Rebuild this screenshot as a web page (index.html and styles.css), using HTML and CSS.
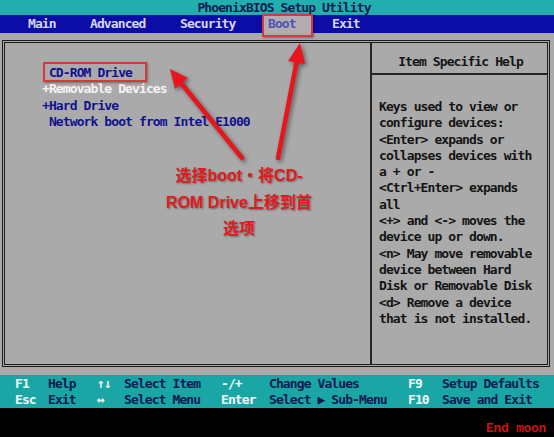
FILE: index.html
```html
<!DOCTYPE html>
<html lang="zh">
<head>
<meta charset="utf-8">
<title>PhoenixBIOS Setup Utility</title>
<link rel="stylesheet" href="styles.css">
</head>
<body>
<div class="screen">
  <header class="title">PhoenixBIOS Setup Utility</header>
  <nav class="menu">
    <span class="mi mi-main">Main</span>
    <span class="mi mi-adv">Advanced</span>
    <span class="mi mi-sec">Security</span>
    <span class="mi mi-boot">Boot</span>
    <span class="mi mi-exit">Exit</span>
  </nav>
  <main class="main">
    <div class="frame">
      <section class="left">
        <div class="item"> CD-ROM Drive</div>
        <div class="item white">+Removable Devices</div>
        <div class="item">+Hard Drive</div>
        <div class="item"> Network boot from Intel E1000</div>
      </section>
      <aside class="right">
        <div class="help-head">Item Specific Help</div>
        <div class="help-body">Keys used to view or
configure devices:
&lt;Enter&gt; expands or
collapses devices with
a + or -
&lt;Ctrl+Enter&gt; expands
all
&lt;+&gt; and &lt;-&gt; moves the
device up or down.
&lt;n&gt; May move removable
device between Hard
Disk or Removable Disk
&lt;d&gt; Remove a device
that is not installed.</div>
      </aside>
    </div>
  </main>
  <footer class="keys">
    <span class="k">F1</span><span class="d">Help</span><span class="k">↑↓</span><span class="d">Select Item</span><span class="k">-/+</span><span class="d">Change Values</span><span class="k">F9</span><span class="d">Setup Defaults</span>
    <span class="k">Esc</span><span class="d">Exit</span><span class="k">↔</span><span class="d">Select Menu</span><span class="k">Enter</span><span class="d">Select ▶ Sub-Menu</span><span class="k">F10</span><span class="d">Save and Exit</span>
  </footer>
  <div class="bottom"><span class="sig">End moon</span></div>

  <div class="mark mark-boot"></div>
  <div class="mark mark-cd"></div>
  <svg class="arrows" width="554" height="437" viewBox="0 0 554 437">
    <g class="arrow">
      <line x1="242" y1="158" x2="181" y2="83" />
      <polygon points="170,69 188,78 175,89" />
    </g>
    <g class="arrow">
      <line x1="278" y1="158" x2="296.6" y2="62" />
      <polygon points="300,43 305,64 288,61" />
    </g>
  </svg>
  <div class="note">选择boot・将CD-<br>ROM Drive上移到首<br>选项</div>
</div>
</body>
</html>
```
FILE: styles.css
```css
* { box-sizing: border-box; }
html, body { margin: 0; padding: 0; background: #000; }
body { width: 554px; height: 437px; overflow: hidden; }

.screen {
  position: relative;
  width: 554px;
  height: 437px;
  display: flex;
  flex-direction: column;
  font-family: "DejaVu Sans Mono", "Liberation Mono", monospace;
  font-weight: bold;
  font-size: 13px;
  letter-spacing: -0.9px;
}

.title {
  height: 15px;
  line-height: 16px;
  background: #22aeae;
  color: #0c1e4e;
  text-align: center;
  padding-left: 14px;
}

.menu {
  height: 18px;
  background: #0c0ca6;
  color: #d6d6ee;
  display: flex;
  align-items: stretch;
  line-height: 18px;
  padding-left: 28px;
}
.mi { display: block; }
.mi-main { width: 62px; }
.mi-adv { width: 90px; }
.mi-sec { width: 82px; }
.mi-boot {
  width: 51px;
  padding-left: 6px;
  background: #b4acb2;
  color: #4a56b4;
}
.mi-exit { margin-left: 19px; }

.main {
  height: 342px;
  background: #aaaaaa;
  padding: 7px 4px 0 2px;
}
.frame {
  height: 327px;
  border: 3px double #1c1c1c;
  display: flex;
}
.left {
  flex: 1;
  padding: 22px 0 0 37px;
  color: #12128e;
}
.item {
  white-space: pre;
  height: 16.3px;
  line-height: 16.3px;
}
.item.white { color: #f4f4f4; }

.right {
  width: 177px;
  border-left: 2px solid #262626;
  color: #141414;
  display: flex;
  flex-direction: column;
}
.help-head {
  height: 32px;
  border-bottom: 2px solid #262626;
  padding-top: 11px;
  line-height: 16px;
  text-align: center;
  padding-left: 2px;
}
.help-body {
  white-space: pre;
  padding: 24px 0 0 7px;
  line-height: 16.3px;
}

.keys {
  height: 33px;
  background: #1ba6a6;
  display: grid;
  grid-template-columns: 33px 49px 27px 97px 48px 139px 34px auto;
  grid-auto-rows: 16px;
  padding: 0 0 0 15px;
  line-height: 18px;
}
.keys .k { color: #f2f6f6; white-space: pre; }
.keys .d { color: #0c1a52; white-space: pre; }

.bottom {
  flex: 1;
  background: #000;
  display: flex;
  justify-content: flex-end;
  align-items: flex-end;
  padding: 0 8px 0 0;
}
.sig {
  color: #cc1414;
  font-family: "Liberation Mono", monospace;
  font-size: 13px;
  letter-spacing: -0.3px;
  line-height: 16px;
}

/* annotations over the screenshot */
.mark {
  position: absolute;
  border: 2px solid #d8383c;
  box-shadow: 1px 1px 2px rgba(0,0,0,0.35);
}
.mark-boot { left: 262px; top: 14px; width: 51px; height: 23px; }
.mark-cd { left: 43px; top: 62px; width: 104px; height: 20px; }

.arrows {
  position: absolute;
  left: 0;
  top: 0;
  filter: drop-shadow(2px 2px 2px rgba(0,0,0,0.45));
}
.arrow line { stroke: #e8161c; stroke-width: 4.5; stroke-linecap: round; }
.arrow polygon { fill: #e8161c; }

.note {
  position: absolute;
  left: 154px;
  top: 163px;
  width: 170px;
  text-align: center;
  font-family: "Liberation Sans", "Noto Sans CJK SC", sans-serif;
  font-weight: bold;
  font-size: 16px;
  letter-spacing: 0;
  line-height: 26.5px;
  color: #e01a1e;
  text-shadow: 1px 1px 2px rgba(0,0,0,0.4);
}
```
